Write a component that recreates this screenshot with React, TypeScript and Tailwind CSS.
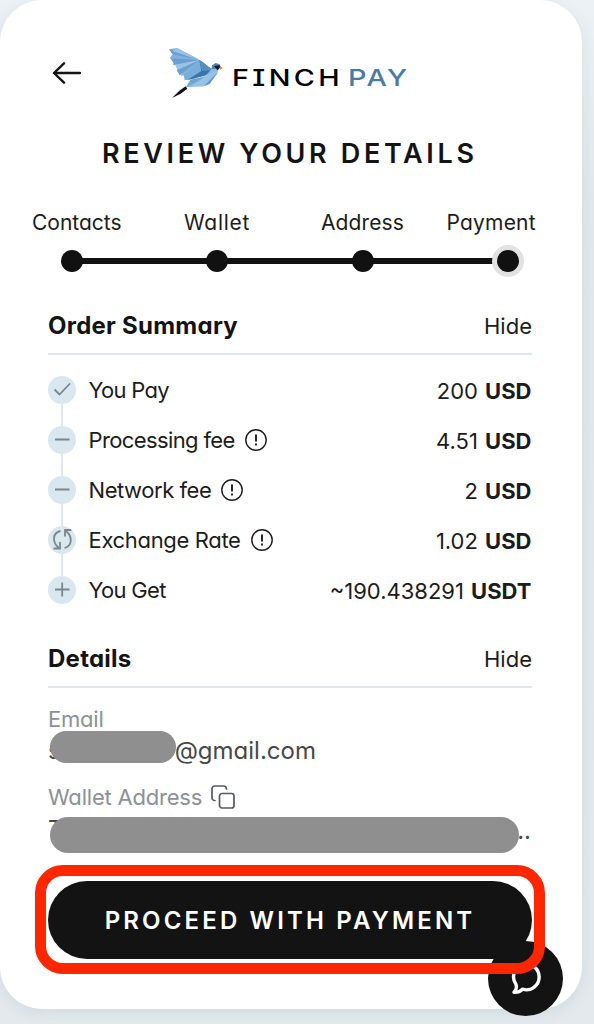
import type { ReactNode } from "react"

const STEPS = [
  { label: "Contacts", className: "w-[89px] ml-[32px] tracking-[0px]" },
  { label: "Wallet", className: "w-[67px] ml-[63px] tracking-[0.7px]" },
  { label: "Address", className: "w-[84px] ml-[70px] tracking-[0.1px]" },
  { label: "Payment", className: "w-[91px] ml-[41.5px] tracking-[0.2px]" },
]

type RowIcon = "check" | "minus" | "rate" | "plus"

type Row = {
  icon: RowIcon
  label: string
  value: string
  unit: string
  tracking: string
  info?: boolean
}

const ROWS: Row[] = [
  { icon: "check", label: "You Pay", value: "200", unit: "USD", tracking: "tracking-[-0.7px]" },
  { icon: "minus", label: "Processing fee", value: "4.51", unit: "USD", tracking: "tracking-[-0.62px]", info: true },
  { icon: "minus", label: "Network fee", value: "2", unit: "USD", tracking: "tracking-[-0.45px]", info: true },
  { icon: "rate", label: "Exchange Rate", value: "1.02", unit: "USD", tracking: "tracking-[-0.33px]", info: true },
  { icon: "plus", label: "You Get", value: "~190.438291", unit: "USDT", tracking: "tracking-[-0.7px]" },
]

const ICON_PATHS: Record<RowIcon, string> = {
  check: "M6.5 13.5l5 5 10.500-11",
  minus: "M7 13.500h14.500",
  plus: "M7 13.500h14.500M14.200 6.500v14",
  rate: "M12.500 5C5 6.500 3.500 15.500 10.500 21.500M5.500 22.500h6.500v-6.500M16.500 22C24 20 25.200 11 18 5M23.500 4h-6.500v6.500",
}

function Bird() {
  return (
    <svg className="ml-[87px] h-[51px] w-[56px]" viewBox="54 36 168 153">
      {/* Wing */}
      <path d="M57 43l24-4 54 28 24 14 27 25-52 26-31 4 8-17-19 3 7-17-19 2 5-15-17-3 6-14-15-6 9-11z" fill="#82b3df" />
      <path d="M57 43l90 32-79-17zM61 70l87 5-73 14zM80 105l68-30-59 46z" fill="#6b9fce" />
      <path d="M81 39l66 36-78-26zM76 89l72-14-66 30z" fill="#98c3e8" />
      <path d="M101 120l47-45 6 32-50 28z" fill="#79aedb" />
      <path d="M148 75l42 31-25 16-54 13 43-27z" fill="#3b74a6" />
      <path d="M148 75l42 31-34 2z" fill="#5490c2" />
      {/* Body and tail */}
      <path d="M190 95l15 8-3 13-23 30-18 8-54 3 15-23 45-11z" fill="#8ebce4" />
      <path d="M122 134l57-11-68 31z" fill="#6ea5d4" />
      <path d="M167 123l35-15-41 46-37 0z" fill="#97c3e8" />
      <path d="M161 154l40-39-22 31z" fill="#6197c4" />
      <path d="M186 91l11-7 12 4 3 7-11 6-17 2z" fill="#5585a9" />
      <path d="M192 93l17-2 2 6-8 9z" fill="#15171c" />
      <path d="M209 92l10 7-9 5z" fill="#e08a62" />
      <path d="M107 154l5 7-20 15-26 13 22-22z" fill="#111418" />
    </svg>
  )
}

function InfoIcon() {
  return (
    <svg className="size-[22px]" viewBox="0 0 22 22" fill="none" stroke="#1c1c1c">
      <circle cx="11" cy="11" r="10.2" strokeWidth="1.4" />
      <path d="M11 5.600v6.800M11 14.400v2" strokeWidth="1.9" />
    </svg>
  )
}

function SectionHeader({ title, children }: { title: string; children?: ReactNode }) {
  return (
    <div className="flex items-center justify-between">
      <h2 className="mt-px text-[24px] leading-8 font-bold tracking-[0.25px] text-[#141414]">{title}</h2>
      {children}
    </div>
  )
}

export default function App() {
  return (
    <div className="relative h-[1024px] w-[594px] overflow-hidden bg-linear-to-b from-[#ebf1f5] via-[#e1e7eb] via-20% to-[#e3e9ed] font-['Inter',sans-serif] text-[#1c1c1c] [font-feature-settings:'cv11']">
      <main className="flex h-[1009px] w-[582px] flex-col rounded-[42px] bg-white shadow-[0_4px_14px_rgba(120,140,155,0.14)]">
        {/* Back arrow and brand */}
        <header className="mt-[47px] flex h-[51px] items-center">
          <svg className="ml-[52px] h-[24px] w-[29px]" viewBox="0 0 29 24" fill="none" stroke="#141414" strokeWidth="2.4" strokeLinecap="round" strokeLinejoin="round">
            <path d="M28 12H2M12 2.300L2 12l10 9.700" />
          </svg>
          <Bird />
          <div className="ml-[8px] mt-[10px] flex w-[180px] text-[23px] leading-8 font-medium [font-feature-settings:'cv08']">
            <span className="w-[116px] origin-left scale-x-[1.25] tracking-[2.7px] text-black">FINCH</span>
            <span className="origin-left scale-x-[1.25] tracking-[1.8px] text-[#4a7ba6]">PAY</span>
          </div>
        </header>

        <h1 className="ml-[102px] mt-[40px] whitespace-nowrap text-[27px] leading-8 font-semibold tracking-[3.65px] text-[#141414]">
          REVIEW YOUR DETAILS
        </h1>

        {/* Stepper */}
        <div className="mt-[39px] flex text-[21px] leading-[28px]">
          {STEPS.map((step) => (
            <span key={step.label} className={`${step.className} whitespace-nowrap`}>
              {step.label}
            </span>
          ))}
        </div>
        <div className="ml-[60.5px] mt-[9px] flex h-[30px] w-[458.5px] items-center">
          {STEPS.map((step, i) => (
            <div key={step.label} className={i === 0 ? "flex items-center" : "flex flex-1 items-center"}>
              {i > 0 && <div className="-mx-1 h-[6px] flex-1 bg-[#111]" />}
              <div className={i === 3 ? "size-[22px] rounded-full bg-[#111] ring-[5px] ring-[#e2e2e2]" : "size-[22px] rounded-full bg-[#111]"} />
            </div>
          ))}
        </div>

        <div className="mx-[48px] mt-[33px] w-[484px]">
          <SectionHeader title="Order Summary">
            <button className="text-[22px] leading-8">Hide</button>
          </SectionHeader>
          <div className="mt-[11px] h-[2px] bg-[#dde7ef]" />

          <div className="mt-[10px]">
            {ROWS.map((row, i) => (
              <div key={row.label} className="flex h-[50px] items-center">
                <div className="relative">
                  {i < ROWS.length - 1 && <div className="absolute left-[13px] top-[28px] h-[22px] w-[2px] bg-[#dde7ef]" />}
                  <svg className="size-[28px] rounded-full bg-[#d9e8ef]" viewBox="0 0 28 28" fill="none" stroke="#7b868c" strokeWidth="1.8">
                    <path d={ICON_PATHS[row.icon]} />
                  </svg>
                </div>
                <span className={`ml-[12.5px] mr-[10px] text-[22px] leading-8 ${row.tracking}`}>{row.label}</span>
                {row.info && <InfoIcon />}
                <span className="ml-auto mr-[0.5px] mt-px text-[22px] leading-8 [word-spacing:1px]">
                  {row.value} <b className="font-bold">{row.unit}</b>
                </span>
              </div>
            ))}
          </div>

          <div className="mt-[27px]">
            <SectionHeader title="Details">
              <button className="text-[22px] leading-8">Hide</button>
            </SectionHeader>
          </div>
          <div className="mt-[11px] h-[2px] bg-[#e4e7e9]" />

          <div className="mt-[15px] text-[22px] leading-8 tracking-[-0.2px] text-[#899296]">Email</div>
          <div className="relative flex h-[32px] items-center text-[24px] leading-8 text-[#484848]">
            <span>s</span>
            <span className="ml-[114px]">@gmail.com</span>
            <div className="absolute left-[2px] top-[-4px] h-[32px] w-[126px] rounded-full bg-[#8f8f8f]" />
          </div>
          <div className="mt-[14px] flex h-[32px] items-center text-[22px] leading-8 tracking-[-0.2px] text-[#899296]">
            Wallet Address
            <svg className="ml-[9px] size-[24px]" viewBox="0 0 24 24" fill="none" stroke="#555b5e" strokeWidth="1.7" strokeLinecap="round">
              <path d="M4 15.500c-2 0-3-1-3-3V4c0-2 1-3 3-3h8.500c2 0 3 1 3 3" />
              <rect x="8.500" y="8.500" width="14.500" height="14.500" rx="2.500" />
            </svg>
          </div>
          <div className="relative flex h-[40px] justify-between text-[24px] leading-[32px] text-[#484848]">
            <span className="mt-px">T</span>
            <span className="mr-px mt-[2px]">...</span>
            <div className="absolute left-[2px] top-[4px] h-[36px] w-[469px] rounded-full bg-[#8f8f8f]" />
          </div>

          <button className="mt-[28px] block h-[78px] w-[484px] whitespace-nowrap rounded-full bg-[#131313] pt-[2px] text-[24px] font-semibold tracking-[3.15px] text-white">
            PROCEED WITH PAYMENT
          </button>
        </div>
      </main>

      {/* Chat launcher */}
      <button className="absolute left-[488px] top-[941px] flex size-[75px] items-center justify-center rounded-full bg-[#131313]">
        <svg className="h-[36px] w-[34px]" viewBox="0 0 34 36" fill="none" stroke="white" strokeWidth="3.400" strokeLinejoin="round" strokeLinecap="round">
          <path d="M7 23.500A12.800 12.800 0 1 1 13.500 28.200C11 30.800 8.500 31.400 5 31.200C7.200 29.200 8 26.800 7 23.500z" />
        </svg>
      </button>

      {/* Highlight frame around the main action */}
      <div className="pointer-events-none absolute left-[35px] top-[865px] h-[109px] w-[510px] rounded-[28px] border-[11px] border-[#ff2600]" />
    </div>
  )
}
